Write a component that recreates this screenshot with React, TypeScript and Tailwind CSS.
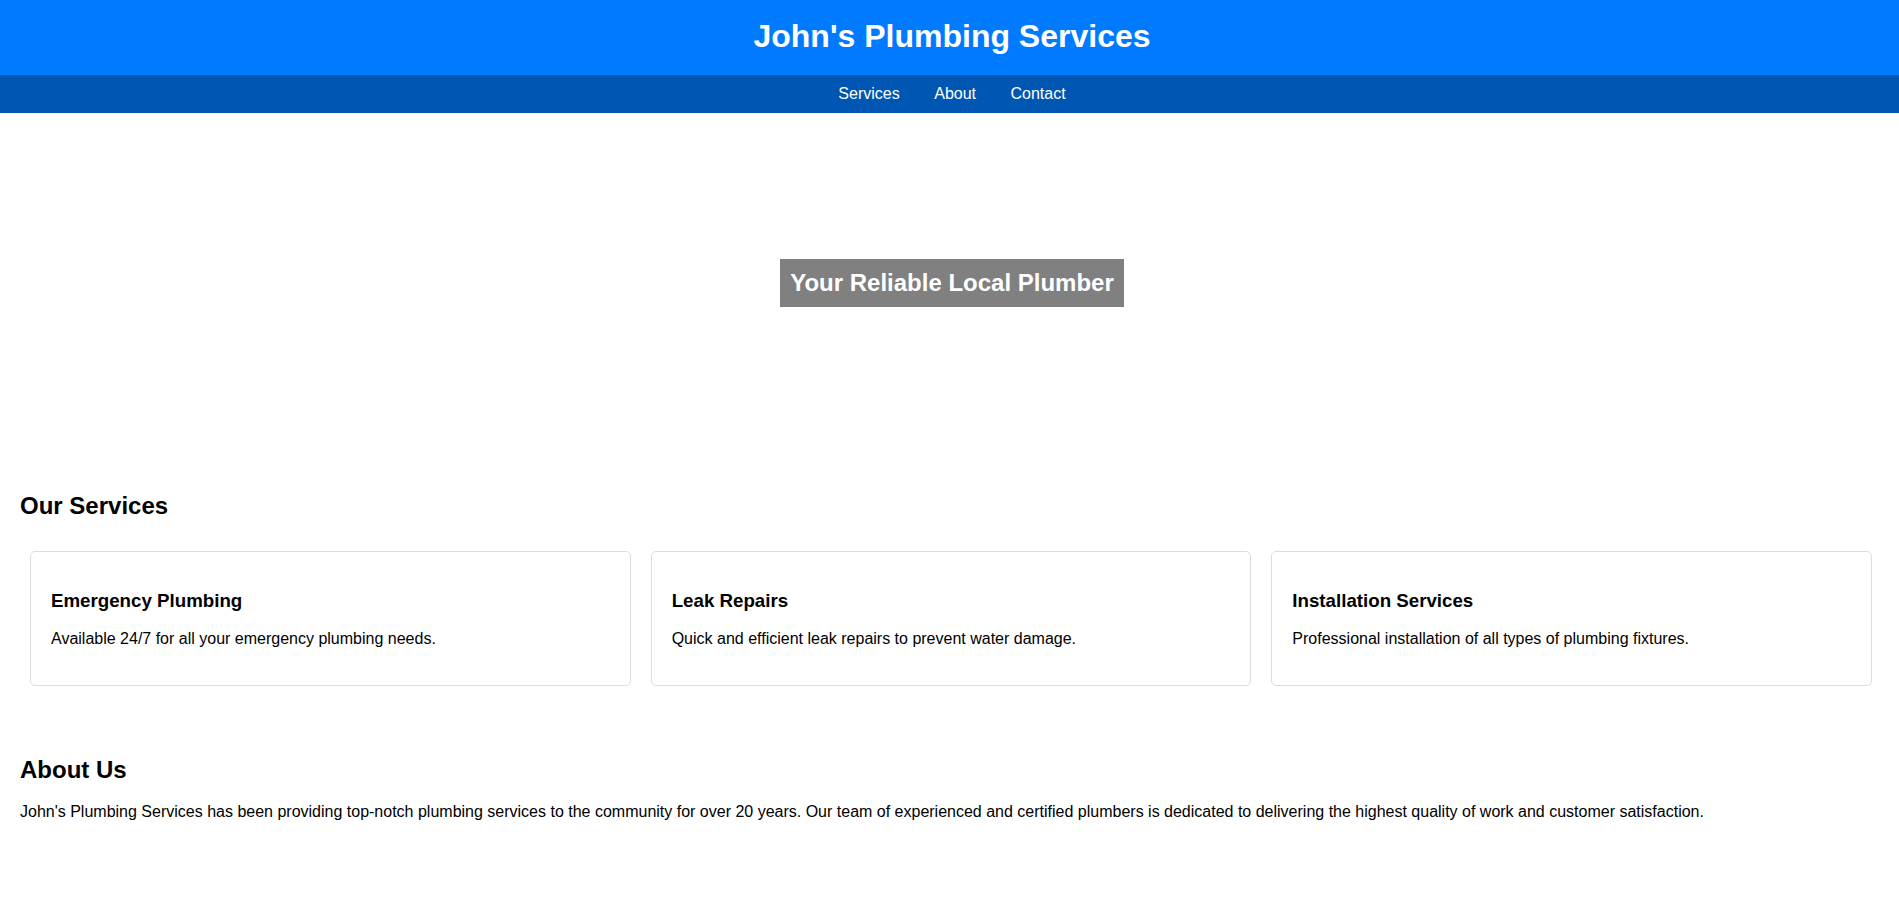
export default function App() {
  const services = [
    { title: 'Emergency Plumbing', text: 'Available 24/7 for all your emergency plumbing needs.' },
    { title: 'Leak Repairs', text: 'Quick and efficient leak repairs to prevent water damage.' },
    { title: 'Installation Services', text: 'Professional installation of all types of plumbing fixtures.' },
  ];

  return (
    <div className="min-h-screen bg-white text-black font-['Liberation_Sans',Arial,sans-serif]">
      <header className="h-[75px] bg-[#007bff] pt-[18px] pl-[5px] text-center text-white">
        <h1 className="text-[32px] leading-[37px] font-bold">John's Plumbing Services</h1>
      </header>
      <nav className="h-[38px] bg-[#0056b3] pt-[10px] pl-[5px] flex justify-center gap-[34.5px] text-base leading-[18.4px] text-white">
        <a href="#services">Services</a>
        <a href="#about">About</a>
        <a href="#contact">Contact</a>
      </nav>

      <section className="h-[339px] flex items-center justify-center pl-[5px]">
        <h2 className="bg-[#808080] px-[10px] py-[10px] text-[24px] leading-[28px] font-bold text-white">
          Your Reliable Local Plumber
        </h2>
      </section>

      <section id="services" className="pt-[20px] pb-[20px] pl-[20px] pr-[17px]">
        <h2 className="mt-[20px] mb-[20px] text-[24px] leading-[27.6px] font-bold">Our Services</h2>
        <div className="flex gap-5 pt-[11px] pb-[10px] px-[10px]">
          {services.map((s) => (
            <div key={s.title} className="flex-1 rounded-[5px] border border-[#ddd] px-5 pt-[20px] pb-5">
              <h3 className="mt-[18.7px] mb-[18.7px] text-[18.72px] leading-[21.5px] font-bold">{s.title}</h3>
              <p className="mb-4 text-base leading-[18.4px]">{s.text}</p>
            </div>
          ))}
        </div>
      </section>

      <section id="about" className="px-[20px] pt-[20px] pb-[20px]">
        <h2 className="mt-[20px] mb-[20px] text-[24px] leading-[27.6px] font-bold">About Us</h2>
        <p className="text-base leading-[18.4px]">
          John's Plumbing Services has been providing top-notch plumbing services to the community for over 20 years. Our team of experienced and certified plumbers is dedicated to delivering the highest quality of work and customer satisfaction.
        </p>
      </section>
    </div>
  );
}
